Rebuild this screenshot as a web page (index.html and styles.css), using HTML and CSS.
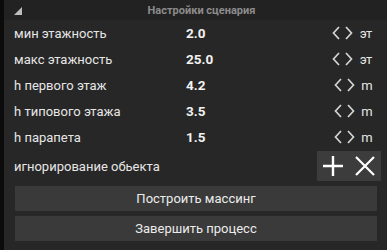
FILE: index.html
```html
<!DOCTYPE html>
<html>
<head>
<meta charset="utf-8">
<link rel="stylesheet" href="styles.css">
</head>
<body>
<div class="frame">
  <div class="strip"></div>
  <div class="panel">
    <div class="header">
      <svg class="tri" width="8" height="8" viewBox="0 0 8 8"><polygon points="0,8 8,8 8,0" fill="#bdbdbd"/></svg>
      <span class="title">Настройки сценария</span>
    </div>
    <div class="rows">
      <div class="row">
        <span class="label">мин этажность</span>
        <span class="value">2.0</span>
        <span class="arrows"><svg width="21" height="14" viewBox="0 0 21 14"><polyline points="7,1 1.5,7 7,13" fill="none" stroke="#d4d4d4" stroke-width="1.7"/><polyline points="14,1 19.5,7 14,13" fill="none" stroke="#d4d4d4" stroke-width="1.7"/></svg></span>
        <span class="unit">эт</span>
      </div>
      <div class="row">
        <span class="label">макс этажность</span>
        <span class="value">25.0</span>
        <span class="arrows"><svg width="21" height="14" viewBox="0 0 21 14"><polyline points="7,1 1.5,7 7,13" fill="none" stroke="#d4d4d4" stroke-width="1.7"/><polyline points="14,1 19.5,7 14,13" fill="none" stroke="#d4d4d4" stroke-width="1.7"/></svg></span>
        <span class="unit">эт</span>
      </div>
      <div class="row">
        <span class="label">h первого этаж</span>
        <span class="value">4.2</span>
        <span class="arrows m"><svg width="21" height="14" viewBox="0 0 21 14"><polyline points="7,1 1.5,7 7,13" fill="none" stroke="#d4d4d4" stroke-width="1.7"/><polyline points="14,1 19.5,7 14,13" fill="none" stroke="#d4d4d4" stroke-width="1.7"/></svg></span>
        <span class="unit">m</span>
      </div>
      <div class="row">
        <span class="label">h типового этажа</span>
        <span class="value">3.5</span>
        <span class="arrows m"><svg width="21" height="14" viewBox="0 0 21 14"><polyline points="7,1 1.5,7 7,13" fill="none" stroke="#d4d4d4" stroke-width="1.7"/><polyline points="14,1 19.5,7 14,13" fill="none" stroke="#d4d4d4" stroke-width="1.7"/></svg></span>
        <span class="unit">m</span>
      </div>
      <div class="row">
        <span class="label">h парапета</span>
        <span class="value">1.5</span>
        <span class="arrows m"><svg width="21" height="14" viewBox="0 0 21 14"><polyline points="7,1 1.5,7 7,13" fill="none" stroke="#d4d4d4" stroke-width="1.7"/><polyline points="14,1 19.5,7 14,13" fill="none" stroke="#d4d4d4" stroke-width="1.7"/></svg></span>
        <span class="unit">m</span>
      </div>
      <div class="row row-ignore">
        <span class="label">игнорирование обьекта</span>
        <div class="iconbox">
          <svg width="24" height="24" viewBox="0 0 24 24"><path d="M12 2V22M2 12H22" stroke="#ffffff" stroke-width="2.4" fill="none"/></svg>
          <svg width="24" height="24" viewBox="0 0 24 24"><path d="M3 3L21 21M21 3L3 21" stroke="#ffffff" stroke-width="2.2" fill="none"/></svg>
        </div>
      </div>
    </div>
    <div class="buttons">
      <div class="btn">Построить массинг</div>
      <div class="btn">Завершить процесс</div>
    </div>
  </div>
</div>
</body>
</html>
```
FILE: styles.css
```css
html, body {
  margin: 0;
  padding: 0;
  width: 387px;
  height: 250px;
  overflow: hidden;
  background: #262626;
  font-family: Roboto, "Noto Sans", sans-serif;
}
.frame {
  display: flex;
  width: 387px;
  height: 250px;
}
.strip {
  width: 4px;
  background: #0b0b0b;
  flex: none;
}
.panel {
  flex: 1;
  background: #272727;
  display: flex;
  flex-direction: column;
}
.header {
  height: 20px;
  background: #222222;
  display: flex;
  align-items: center;
  position: relative;
}
.tri {
  margin-left: 10px;
  margin-top: 1px;
}
.title {
  position: absolute;
  left: 0;
  right: 0;
  text-align: center;
  color: #8c8c8c;
  font-size: 11px;
  font-weight: bold;
  padding-left: 12px;
}
.rows {
  padding: 0 6px 0 10px;
}
.row {
  height: 26px;
  display: flex;
  align-items: center;
  color: #e6e6e6;
  font-size: 13px;
}
.label {
  width: 172px;
}
.value {
  font-weight: bold;
  color: #f2f2f2;
  font-size: 13.5px;
}
.arrows {
  margin-left: auto;
  display: flex;
  align-items: center;
}
.unit {
  width: 26px;
  text-align: center;
  margin-right: 2px;
}
.arrows.m + .unit {
  width: 24px;
  margin-right: 2px;
}
.row-ignore {
  height: 30px;
  margin-top: 1px;
}
.iconbox {
  margin-left: auto;
  background: #3c3c3c;
  width: 64px;
  height: 30px;
  display: flex;
  align-items: center;
  justify-content: space-around;
  margin-right: 0;
}
.buttons {
  padding: 5px 10px 0 11px;
  display: flex;
  flex-direction: column;
  gap: 5px;
}
.btn {
  height: 25px;
  background: #3a3a3a;
  color: #ececec;
  font-size: 13px;
  display: flex;
  align-items: center;
  justify-content: center;
}
```
